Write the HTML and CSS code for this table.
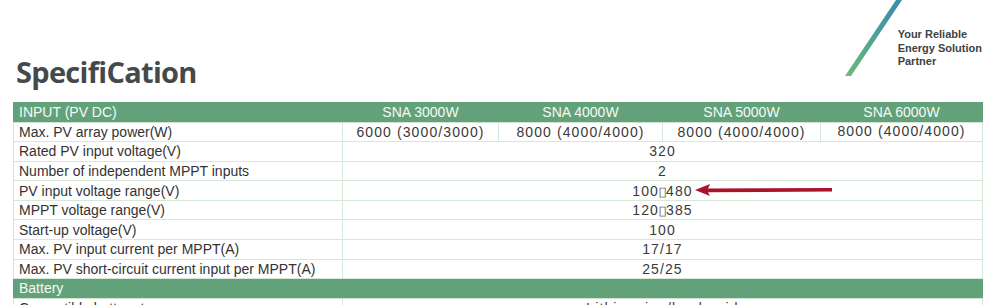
FILE: index.html
```html
<!DOCTYPE html>
<html>
<head>
<meta charset="utf-8">
<link rel="stylesheet" href="styles.css">
</head>
<body>
<div class="page">
  <header class="top">
    <h1 class="title">SpecifiCation</h1>
    <div class="brand">
      <svg class="stripe" width="60" height="78" viewBox="0 0 60 78">
        <defs>
          <linearGradient id="g" x1="0" y1="1" x2="0.6" y2="0">
            <stop offset="0" stop-color="#6cbb7d"/>
            <stop offset="1" stop-color="#3f8fa8"/>
          </linearGradient>
        </defs>
        <polygon points="0,76 6,76 57,0 51,0" fill="url(#g)"/>
      </svg>
      <div class="tagline">Your Reliable<br>Energy Solution<br>Partner</div>
    </div>
  </header>
  <div class="tablewrap">
    <table class="spec">
      <colgroup>
        <col class="c-label"><col class="c-3"><col class="c-4"><col class="c-5"><col class="c-6">
      </colgroup>
      <tr class="head">
        <td class="label">INPUT (PV DC)</td>
        <td>SNA 3000W</td><td>SNA 4000W</td><td>SNA 5000W</td><td>SNA 6000W</td>
      </tr>
      <tr>
        <td class="label">Max. PV array power(W)</td>
        <td class="val">6000 (3000/3000)</td><td class="val">8000 (4000/4000)</td><td class="val">8000 (4000/4000)</td><td class="val up">8000 (4000/4000)</td>
      </tr>
      <tr><td class="label">Rated PV input voltage(V)</td><td class="val" colspan="4">320</td></tr>
      <tr><td class="label">Number of independent MPPT inputs</td><td class="val" colspan="4">2</td></tr>
      <tr><td class="label">PV input voltage range(V)</td><td class="val" colspan="4">100<span class="tofu">▯</span>480</td></tr>
      <tr><td class="label">MPPT voltage range(V)</td><td class="val" colspan="4">120<span class="tofu">▯</span>385</td></tr>
      <tr><td class="label">Start-up voltage(V)</td><td class="val" colspan="4">100</td></tr>
      <tr><td class="label">Max. PV input current per MPPT(A)</td><td class="val" colspan="4">17/17</td></tr>
      <tr><td class="label">Max. PV short-circuit current input per MPPT(A)</td><td class="val" colspan="4">25/25</td></tr>
      <tr class="head"><td class="label" colspan="5">Battery</td></tr>
      <tr><td class="label">Compatible battery type</td><td class="val" colspan="4">Lithium-ion/lead-acid</td></tr>
    </table>
    <svg class="arrow" width="140" height="14" viewBox="0 0 140 14">
      <polygon points="0,7 15,1 13,5.4 137,5 137,8.6 13,9.2 15,13" fill="#a9142b"/>
    </svg>
  </div>
</div>
</body>
</html>
```
FILE: styles.css
```css
html, body {
  margin: 0;
  padding: 0;
  background: #ffffff;
}
body {
  font-family: "Liberation Sans", Arial, sans-serif;
  color: #333333;
  overflow: hidden;
}
.page {
  width: 1000px;
}
.top {
  height: 102px;
  display: flex;
  justify-content: space-between;
  align-items: flex-start;
}
.title {
  margin: 52px 0 0 16px;
  font-family: "Open Sans", sans-serif;
  font-weight: 700;
  font-size: 29px;
  line-height: 40px;
  color: #444a4b;
  letter-spacing: -0.7px;
}
.brand {
  display: flex;
  align-items: flex-start;
  margin-right: 18px;
}
.stripe {
  display: block;
  margin-right: -7px;
}
.tagline {
  margin-top: 28px;
  font-family: "Liberation Sans", Arial, sans-serif;
  font-weight: 700;
  font-size: 11px;
  line-height: 13.5px;
  color: #3d4347;
}
.tablewrap {
  position: relative;
  padding-left: 13px;
}
.spec {
  border-collapse: collapse;
  table-layout: fixed;
  width: 969px;
  font-size: 14px;
}
.c-label { width: 329px; }
.c-3 { width: 156px; }
.c-4 { width: 164px; }
.c-5 { width: 158px; }
.c-6 { width: 162px; }
.spec td {
  height: 18.58px;
  padding: 0 5px;
  border: 1px solid #d6e9d7;
  text-align: center;
  white-space: nowrap;
  line-height: 16px;
  vertical-align: middle;
}
.spec td.label {
  text-align: left;
}
.spec td.val {
  letter-spacing: 1.1px;
  color: #3a3a3a;
}
.spec td.up {
  vertical-align: top;
  padding-top: 0;
}
.spec tr.head td {
  background: #63a17a;
  color: #f4faf5;
  border-color: #63a17a;
  border-bottom-color: #cfe3d0;
}
.tofu {
  display: inline-block;
  font-size: 13px;
  line-height: 12px;
  letter-spacing: 0;
  color: #777;
  transform: scaleX(1.3);
}
.arrow {
  position: absolute;
  left: 695px;
  top: 81px;
}
```
